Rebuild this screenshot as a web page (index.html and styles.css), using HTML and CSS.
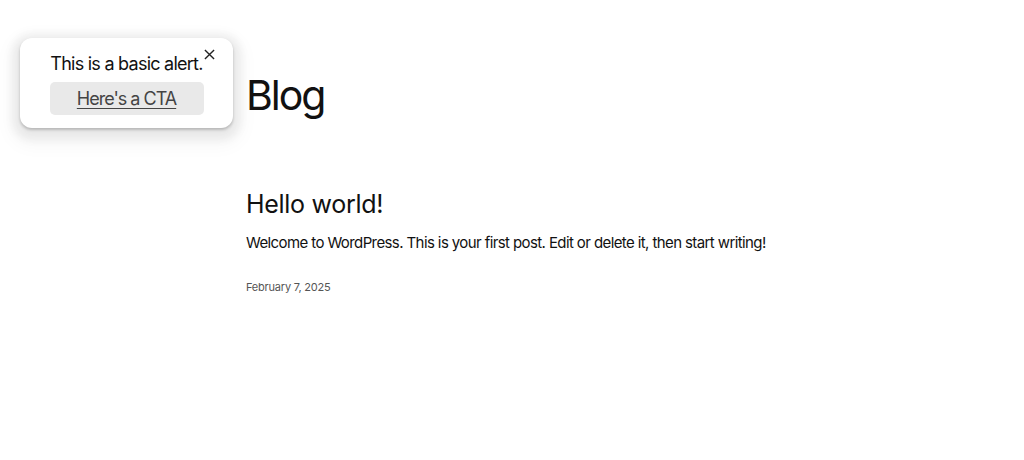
FILE: index.html
```html
<!DOCTYPE html>
<html lang="en">
<head>
<meta charset="utf-8">
<title>Blog</title>
<link rel="stylesheet" href="styles.css">
</head>
<body>
<div class="alert" role="alert">
  <p class="alert-text">This is a basic alert.</p>
  <a class="alert-cta" href="#">Here's a CTA</a>
  <button class="alert-close" aria-label="Close">
    <svg width="12" height="12" viewBox="0 0 12 12"><path d="M1 1 L11 11 M11 1 L1 11" stroke="#222" stroke-width="1.5" fill="none"/></svg>
  </button>
</div>
<main class="page">
  <h1 class="page-title">Blog</h1>
  <article class="post">
    <h2 class="post-title">Hello world!</h2>
    <p class="post-excerpt">Welcome to WordPress. This is your first post. Edit or delete it, then start writing!</p>
    <p class="post-date">February 7, 2025</p>
  </article>
</main>
</body>
</html>
```
FILE: styles.css
```css
* { box-sizing: border-box; }
html, body { margin: 0; padding: 0; background: #fff; }
body {
  font-family: Inter, "Noto Sans", sans-serif;
  color: #111;
}
.page {
  width: 532px;
  margin: 0 auto;
  padding-top: 71px;
}
.page-title {
  margin: 0;
  font-size: 41px;
  font-weight: 400;
  line-height: 48px;
  letter-spacing: -2px;
}
.post { margin-top: 69px; }
.post-title {
  margin: 0;
  font-size: 25px;
  font-weight: 400;
  line-height: 32px;
  letter-spacing: -0.3px;
}
.post-excerpt {
  margin: 11px 0 0;
  font-size: 15px;
  line-height: 24px;
  letter-spacing: -0.6px;
  white-space: nowrap;
}
.post-date {
  margin: 23px 0 0;
  font-size: 11px;
  line-height: 18px;
  letter-spacing: -0.2px;
  color: #555;
}
.alert {
  position: absolute;
  left: 20px;
  top: 38px;
  width: 213px;
  height: 90px;
  background: #fff;
  border-radius: 12px;
  box-shadow: 0 2px 3px rgba(0,0,0,0.22), 0 4px 8px 8px rgba(0,0,0,0.06), 0 8px 18px 11px rgba(0,0,0,0.03);
  display: flex;
  flex-direction: column;
  align-items: center;
  padding-top: 14px;
}
.alert-text {
  margin: 0;
  font-size: 18px;
  line-height: 24px;
  letter-spacing: -0.75px;
  color: #111;
}
.alert-cta {
  margin-top: 6px;
  width: 154px;
  height: 33px;
  background: #e9e9e9;
  border-radius: 5px;
  display: flex;
  align-items: center;
  justify-content: center;
  font-size: 18px;
  color: #444;
  text-decoration: underline;
  text-underline-offset: 3px;
  letter-spacing: -1px;
}
.alert-close {
  position: absolute;
  top: 11px;
  right: 18px;
  border: 0;
  background: none;
  padding: 0;
  width: 11px;
  height: 11px;
  cursor: pointer;
}
.alert-close svg { display: block; width: 11px; height: 11px; }
```
